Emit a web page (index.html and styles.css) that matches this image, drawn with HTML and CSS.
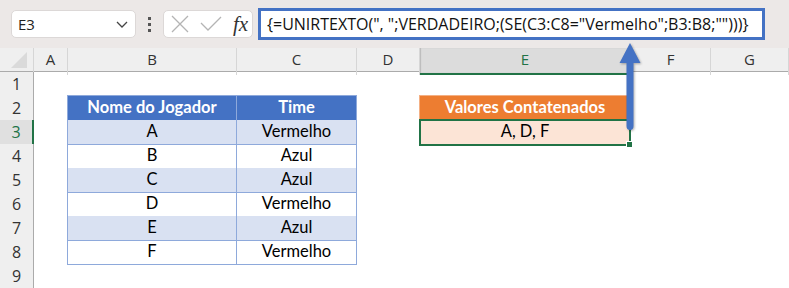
FILE: index.html
```html
<!DOCTYPE html>
<html lang="pt">

<head>
    <meta charset="UTF-8">
    <title>UNIRTEXTO - Valores Contatenados</title>
    <link rel="stylesheet" href="styles.css">
</head>

<body>
    <div class="toolbar">
        <div class="name-box">
            <span>E3</span>
            <svg class="chevron" width="12" height="7" viewBox="0 0 12 7"><path d="M1 1 L6 6 L11 1" fill="none" stroke="#444" stroke-width="1.3"/></svg>
        </div>
        <div class="dots"><i></i><i></i><i></i></div>
        <div class="fx-box">
            <svg width="18" height="18" viewBox="0 0 18 18"><path d="M1 1 L17 17 M17 1 L1 17" stroke="#b4b4b4" stroke-width="1.3"/></svg>
            <svg width="22" height="16" viewBox="0 0 22 16"><path d="M1 7 L8 14 L21 1" fill="none" stroke="#b4b4b4" stroke-width="1.3"/></svg>
            <span class="fx">fx</span>
        </div>
        <div class="formula">{=UNIRTEXTO(", ";VERDADEIRO;(SE(C3:C8="Vermelho";B3:B8;"")))}</div>
    </div>

    <div class="sheet">
        <div class="row head-row">
            <div class="corner"><svg width="30" height="22" viewBox="0 0 30 22"><path d="M27 4 L27 20 L11 20 Z" fill="#dadada"/></svg></div>
            <div class="col-head">A</div>
            <div class="col-head">B</div>
            <div class="col-head">C</div>
            <div class="col-head">D</div>
            <div class="col-head selected">E</div>
            <div class="col-head">F</div>
            <div class="col-head">G</div>
        </div>

        <div class="row">
            <div class="row-head">1</div>
            <div></div><div></div><div></div><div></div><div></div><div></div><div></div>
        </div>
        <div class="row">
            <div class="row-head">2</div>
            <div></div>
            <div class="cell th first top">Nome do Jogador</div>
            <div class="cell th top">Time</div>
            <div></div>
            <div class="cell result-head">Valores Contatenados</div>
            <div></div><div></div>
        </div>
        <div class="row">
            <div class="row-head selected">3</div>
            <div></div>
            <div class="cell band first">A</div>
            <div class="cell band">Vermelho</div>
            <div></div>
            <div class="cell result">A, D, F<span class="handle"></span></div>
            <div></div><div></div>
        </div>
        <div class="row">
            <div class="row-head">4</div>
            <div></div>
            <div class="cell first">B</div>
            <div class="cell">Azul</div>
            <div></div><div></div><div></div><div></div>
        </div>
        <div class="row">
            <div class="row-head">5</div>
            <div></div>
            <div class="cell band first">C</div>
            <div class="cell band">Azul</div>
            <div></div><div></div><div></div><div></div>
        </div>
        <div class="row">
            <div class="row-head">6</div>
            <div></div>
            <div class="cell first">D</div>
            <div class="cell">Vermelho</div>
            <div></div><div></div><div></div><div></div>
        </div>
        <div class="row">
            <div class="row-head">7</div>
            <div></div>
            <div class="cell band first">E</div>
            <div class="cell band">Azul</div>
            <div></div><div></div><div></div><div></div>
        </div>
        <div class="row">
            <div class="row-head">8</div>
            <div></div>
            <div class="cell first">F</div>
            <div class="cell">Vermelho</div>
            <div></div><div></div><div></div><div></div>
        </div>
        <div class="row">
            <div class="row-head">9</div>
            <div></div><div></div><div></div><div></div><div></div><div></div><div></div>
        </div>
    </div>

    <!-- arrow pointing from the result cell up to the formula -->
    <svg class="arrow" width="26" height="92" viewBox="0 0 26 92">
        <path d="M13 1 L23.5 21 L16.5 21 L16.5 84 Q16.5 88 13 88 Q9.5 88 9.5 84 L9.5 21 L2.5 21 Z" fill="#4472c4"/>
    </svg>
</body>

</html>
```

FILE: styles.css
```css
body {
    margin: 0;
    padding: 0;
    background: #fff;
    font-family: 'Open Sans', 'Noto Sans', sans-serif;
    width: 789px;
    height: 288px;
    overflow: hidden;
    position: relative;
}

.toolbar {
    height: 48px;
    background-color: #ece8e7;
    display: flex;
    align-items: center;
    padding-left: 11px;
    box-sizing: border-box;
}

.name-box {
    width: 125px;
    height: 28px;
    box-sizing: border-box;
    background: #fff;
    border: 1px solid #dcd8d7;
    border-radius: 5px;
    display: flex;
    align-items: center;
    justify-content: space-between;
    padding: 0 7px 0 6px;
    font-size: 15px;
    color: #222;
}

.dots {
    width: 27px;
    display: flex;
    flex-direction: column;
    align-items: center;
    gap: 3px;
}

.dots i {
    width: 3px;
    height: 3px;
    background: #555;
}

.fx-box {
    width: 90px;
    height: 28px;
    box-sizing: border-box;
    background: #fff;
    border: 1px solid #dcd8d7;
    border-radius: 5px;
    display: flex;
    align-items: center;
    padding-left: 7px;
    gap: 11px;
}

.fx {
    font-family: 'Liberation Serif', serif;
    font-style: italic;
    font-size: 21px;
    color: #333;
    line-height: 1;
}

.formula {
    margin-left: 5px;
    width: 507px;
    height: 32px;
    box-sizing: border-box;
    border: 3px solid #4472c4;
    background: #fff;
    padding-left: 6px;
    font-size: 16px;
    line-height: 26px;
    color: #111;
    white-space: nowrap;
}

.sheet {
    display: flex;
    flex-direction: column;
}

.row {
    display: grid;
    grid-template-columns: 34px 34px 169px 120px 63px 211px 80px 1fr;
    height: 24px;
}

.head-row {
    background: #efefef;
    border-bottom: 1px solid #ababab;
    height: 24px;
    box-sizing: border-box;
}

.corner {
    border-right: 1px solid #d6d6d6;
}

.col-head {
    text-align: center;
    font-size: 15px;
    line-height: 23px;
    color: #333;
    border-right: 1px solid #d6d6d6;
}

.col-head.selected {
    background: #dcdcdc;
    color: #217346;
    border-bottom: 2px solid #217346;
    box-shadow: inset 1px 0 1px #bbb;
}

.row-head {
    background: #efefef;
    border-right: 1px solid #ababab;
    border-bottom: 1px solid #dadada;
    text-align: center;
    font-size: 16px;
    line-height: 24px;
    color: #333;
    width: 33px;
}

.row-head.selected {
    background: #e0e0e0;
    color: #217346;
    border-right: 2px solid #217346;
    width: 32px;
}

.cell {
    font-family: 'Lato', sans-serif;
    font-size: 16.5px;
    text-align: center;
    line-height: 23px;
    color: #000;
    border-right: 1px solid #8ea9db;
    border-bottom: 1px solid #8ea9db;
    position: relative;
}

.cell.first {
    border-left: 1px solid #8ea9db;
    margin-left: -1px;
}

.cell.top {
    border-top: 1px solid #8ea9db;
    margin-top: -1px;
}

.cell.band {
    background: #d9e1f2;
}

.cell.th {
    background: #4472c4;
    color: #fff;
    font-weight: bold;
}

.cell.result-head {
    background: #ed7d31;
    color: #fff;
    font-weight: bold;
    border: 1px solid #f4b084;
    margin: -1px 0 0 -1px;
}

.cell.result {
    background: #fce4d6;
    border: 2px solid #217346;
    margin: -1px 0 -1px -1px;
    line-height: 21px;
}

.handle {
    position: absolute;
    right: -4px;
    bottom: -4px;
    width: 5px;
    height: 5px;
    background: #217346;
    border: 1px solid #fff;
}

.arrow {
    position: absolute;
    left: 617px;
    top: 42px;
    filter: drop-shadow(1px 1px 1px rgba(0, 0, 0, 0.3));
}
```
